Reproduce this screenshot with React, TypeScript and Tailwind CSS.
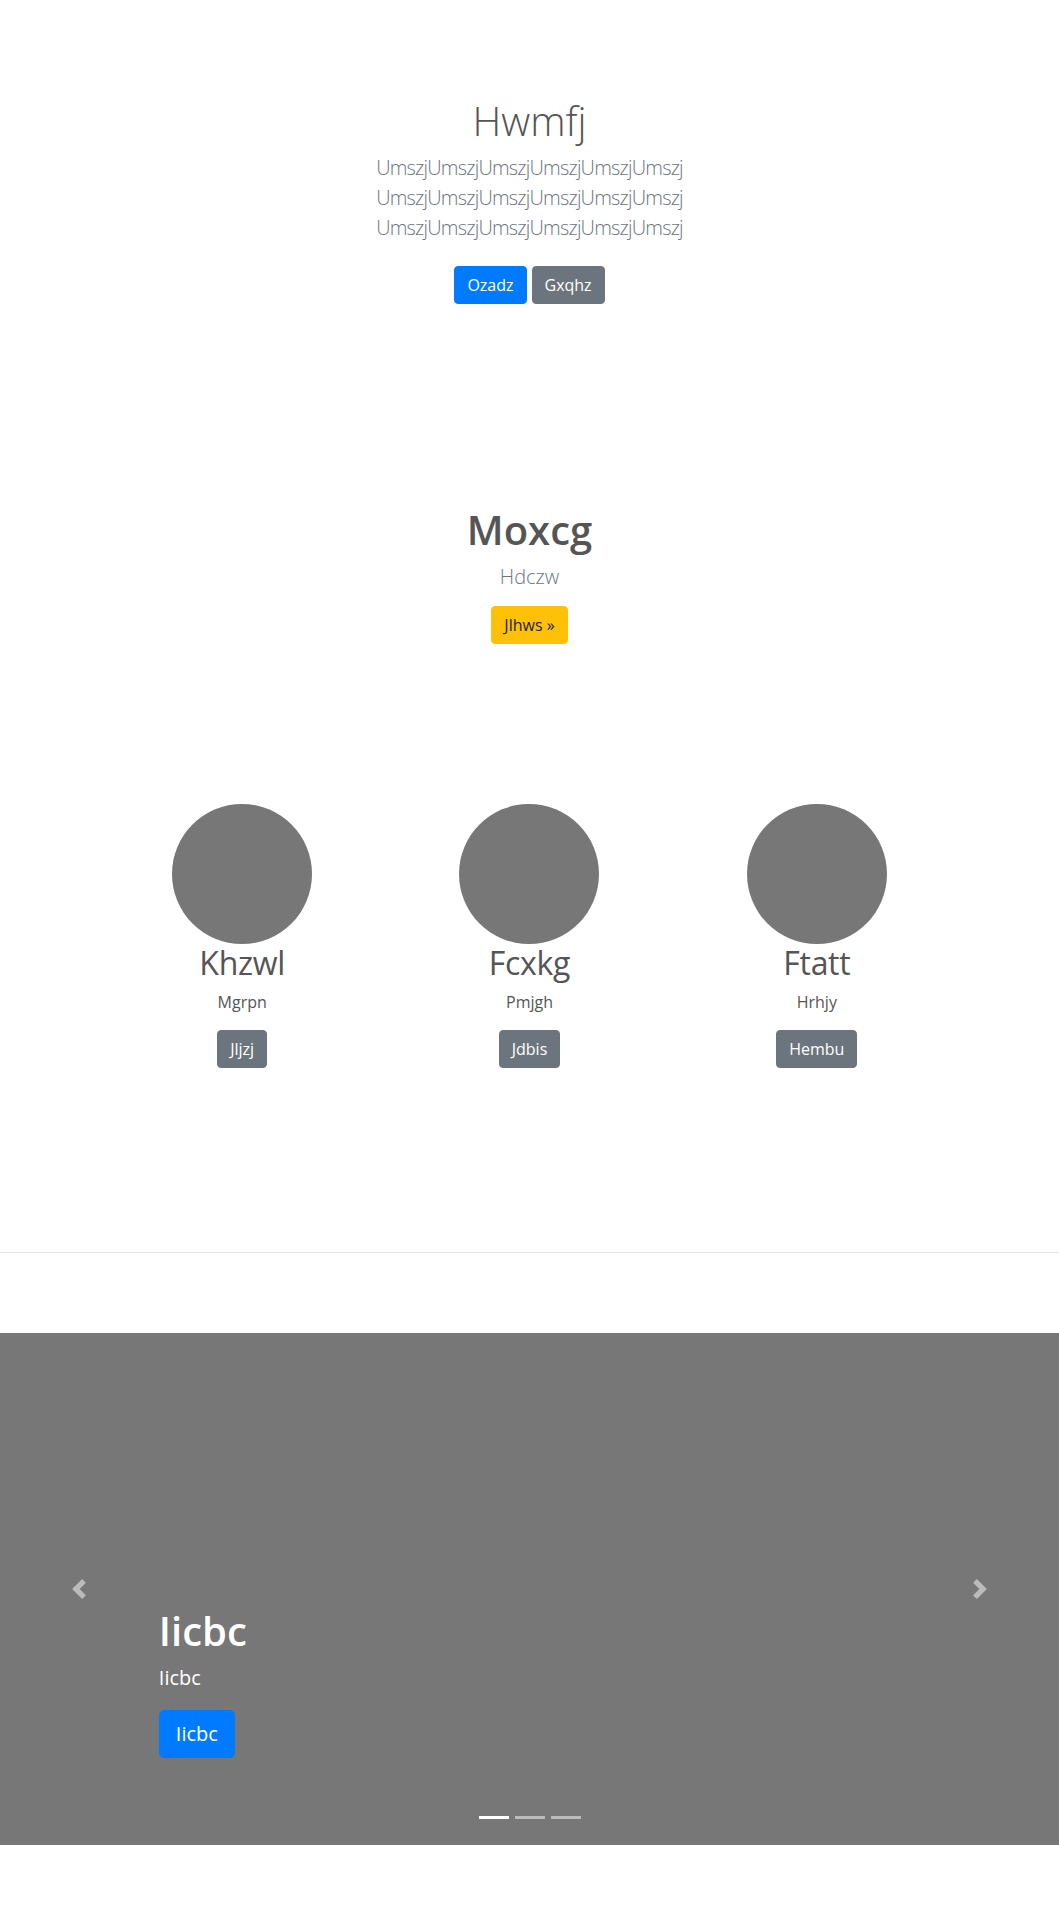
import React from "react";

const font = { fontFamily: '"Open Sans", "Noto Sans", sans-serif' };

function Chevron({ dir }: { dir: "left" | "right" }) {
  return (
    <svg width="20" height="20" viewBox="0 0 8 8" fill="#fff" className="opacity-50">
      {dir === "left" ? (
        <path d="M5.25 0l-4 4 4 4 1.5-1.5-2.5-2.5 2.5-2.5-1.5-1.5z" />
      ) : (
        <path d="M2.75 0l-1.5 1.5 2.5 2.5-2.5 2.5 1.5 1.5 4-4-4-4z" />
      )}
    </svg>
  );
}

function Card({ title, sub, btn }: { title: string; sub: string; btn: string }) {
  return (
    <div className="flex flex-col items-center">
      <div className="w-[140px] h-[140px] rounded-full bg-[#777]" />
      <h2 className="text-[32px] leading-[38px] font-normal text-[#555] mb-2 tracking-[-0.3px]">{title}</h2>
      <p className="text-[16px] leading-[24px] text-[#555] mb-4">{sub}</p>
      <button className="bg-[#6c757d] text-white text-[16px] leading-[24px] px-3 py-[6px] rounded-[4px] border border-[#6c757d]">
        {btn}
      </button>
    </div>
  );
}

export default function App() {
  return (
    <div className="bg-white w-full min-h-[1920px]" style={font}>
      <section className="pt-[97px] text-center">
        <h1 className="text-[40px] leading-[48px] font-light text-[#555]">Hwmfj</h1>
        <div className="mt-2 text-[20px] leading-[30px] font-light text-[#6c757d] tracking-[-0.8px]">
          <div>UmszjUmszjUmszjUmszjUmszjUmszj</div>
          <div>UmszjUmszjUmszjUmszjUmszjUmszj</div>
          <div>UmszjUmszjUmszjUmszjUmszjUmszj</div>
        </div>
        <div className="mt-[23px] flex justify-center gap-[5px]">
          <button className="bg-[#007bff] border border-[#007bff] text-white text-[16px] leading-[24px] px-3 py-[6px] rounded-[4px]">
            Ozadz
          </button>
          <button className="bg-[#6c757d] border border-[#6c757d] text-white text-[16px] leading-[24px] px-3 py-[6px] rounded-[4px]">
            Gxqhz
          </button>
        </div>
      </section>

      <section className="mt-[202px] text-center">
        <h1 className="text-[40px] leading-[48px] font-semibold text-[#555]">Moxcg</h1>
        <p className="mt-2 text-[20px] leading-[30px] font-light text-[#6c757d]">Hdczw</p>
        <div className="mt-[14px] flex justify-center">
          <button className="bg-[#ffc107] border border-[#ffc107] text-[#212529] text-[16px] leading-[24px] px-3 py-[6px] rounded-[4px]">
            Jlhws »
          </button>
        </div>
      </section>

      <section className="mt-[160px] mx-auto w-[862px] grid grid-cols-3">
        <Card title="Khzwl" sub="Mgrpn" btn="Jljzj" />
        <Card title="Fcxkg" sub="Pmjgh" btn="Jdbis" />
        <Card title="Ftatt" sub="Hrhjy" btn="Hembu" />
      </section>

      <hr className="mt-[184px] border-0 border-t border-[#e5e5e5]" />

      <section className="mt-[80px] relative h-[512px] bg-[#777]">
        <div className="absolute left-0 top-0 bottom-0 w-[15%] flex items-center justify-center">
          <Chevron dir="left" />
        </div>
        <div className="absolute right-0 top-0 bottom-0 w-[15%] flex items-center justify-center">
          <Chevron dir="right" />
        </div>
        <div className="absolute left-[15%] right-[15%] bottom-[87px] text-left text-white">
          <h1 className="text-[40px] leading-[48px] font-semibold">Iicbc</h1>
          <p className="mt-2 text-[20px] leading-[30px]">Iicbc</p>
          <button className="mt-[17px] bg-[#007bff] border border-[#007bff] text-white text-[20px] leading-[30px] px-4 py-2 rounded-[5px]">
            Iicbc
          </button>
        </div>
        <div className="absolute left-0 right-0 bottom-[26px] flex justify-center gap-[6px]">
          <span className="block w-[30px] h-[3px] bg-white" />
          <span className="block w-[30px] h-[3px] bg-white opacity-50" />
          <span className="block w-[30px] h-[3px] bg-white opacity-50" />
        </div>
      </section>
    </div>
  );
}
